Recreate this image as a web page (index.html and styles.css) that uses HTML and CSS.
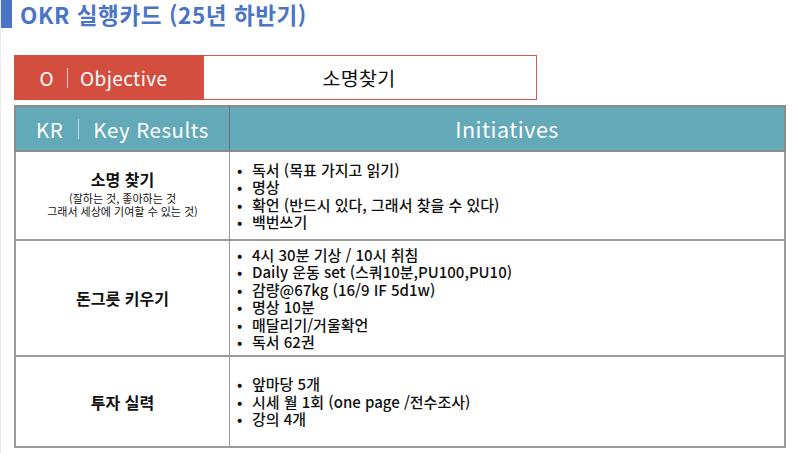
FILE: index.html
```html
<!DOCTYPE html>
<html lang="ko">
<head>
<meta charset="utf-8">
<title>OKR 실행카드</title>
<link rel="stylesheet" href="styles.css">
</head>
<body>
<div class="page">
  <header class="title-bar">
    <span class="title-mark"></span>
    <h1 class="title">OKR 실행카드 (25년 하반기)</h1>
  </header>

  <section class="objective">
    <div class="objective-label">O<span class="sep"></span>Objective</div>
    <div class="objective-value">소명찾기</div>
  </section>

  <section class="okr-table">
    <div class="head head-kr">KR<span class="sep light"></span>Key Results</div>
    <div class="head head-init">Initiatives</div>

    <div class="cell kr kr-1">
      <div class="kr-title">소명 찾기</div>
      <div class="kr-sub">(잘하는 것, 좋아하는 것<br>그래서 세상에 기여할 수 있는 것)</div>
    </div>
    <div class="cell init init-1">
      <ul class="bullets">
        <li>독서 (목표 가지고 읽기)</li>
        <li>명상</li>
        <li>확언 (반드시 있다, 그래서 찾을 수 있다)</li>
        <li>백번쓰기</li>
      </ul>
    </div>

    <div class="cell kr kr-2">
      <div class="kr-title">돈그릇 키우기</div>
    </div>
    <div class="cell init init-2">
      <ul class="bullets">
        <li>4시 30분 기상 / 10시 취침</li>
        <li>Daily 운동 set (스쿼10분,PU100,PU10)</li>
        <li>감량@67kg (16/9 IF 5d1w)</li>
        <li>명상 10분</li>
        <li>매달리기/거울확언</li>
        <li>독서 62권</li>
      </ul>
    </div>

    <div class="cell kr kr-3 last">
      <div class="kr-title">투자 실력</div>
    </div>
    <div class="cell init init-3 last">
      <ul class="bullets">
        <li>앞마당 5개</li>
        <li>시세 월 1회 (one page /전수조사)</li>
        <li>강의 4개</li>
      </ul>
    </div>
  </section>
</div>
</body>
</html>
```

FILE: styles.css
```css
* { box-sizing: border-box; }

html, body {
  margin: 0;
  padding: 0;
  background: #ffffff;
}

body {
  font-family: "Noto Sans CJK KR", "Noto Sans", sans-serif;
  color: #111;
}

.page {
  width: 808px;
  height: 453px;
  border-left: 1px solid #ededed;
  overflow: hidden;
}

.title-bar {
  display: flex;
  align-items: center;
  height: 28px;
  gap: 8px;
}

.title-mark {
  width: 11px;
  height: 28px;
  background: #4a74c6;
}

.title {
  margin: 0;
  font-size: 22.5px;
  line-height: 28px;
  font-weight: 700;
  color: #4a74c6;
  letter-spacing: 0.6px;
}

.objective {
  display: flex;
  margin: 27px 0 0 13px;
  width: 523px;
  height: 45px;
}

.objective-label {
  width: 189px;
  background: #d44e3f;
  color: #fff;
  font-size: 19px;
  letter-spacing: 0.4px;
  display: flex;
  align-items: center;
  justify-content: center;
  padding-right: 10px;
}

.sep {
  display: inline-block;
  width: 1px;
  height: 20px;
  background: rgba(255,255,255,0.75);
  margin: 0 12px 0 13px;
}

.sep.light { background: rgba(255,255,255,0.55); margin: 0 14px 0 15px; }

.objective-value {
  flex: 1;
  border: 1px solid #e0524a;
  display: flex;
  align-items: center;
  justify-content: center;
  font-size: 19.5px;
  color: #111;
  padding-right: 22px;
  letter-spacing: 0.3px;
}

.okr-table {
  display: grid;
  grid-template-columns: 216px 556px;
  grid-template-rows: 47px 89px 116px 91px;
  margin: 5px 0 0 13px;
  width: 772px;
}

.head {
  background: #63a9b8;
  color: #fff;
  font-size: 20.5px;
  letter-spacing: 0.5px;
  display: flex;
  align-items: center;
  justify-content: center;
  border-top: 2px solid #8c8c8c;
  border-bottom: 2px solid #8c8c8c;
}

.head-kr {
  border-left: 2px solid #8c8c8c;
  border-right: 1px solid #6d6d6d;
}

.head-init {
  border-right: 2px solid #8c8c8c;
  font-size: 21.5px;
}

.cell {
  border-bottom: 2px solid #9a9a9a;
}

.kr {
  border-left: 2px solid #9a9a9a;
  border-right: 1px solid #9a9a9a;
  display: flex;
  flex-direction: column;
  align-items: center;
  justify-content: center;
  text-align: center;
}

.init {
  border-right: 2px solid #9a9a9a;
  display: flex;
  align-items: center;
  padding-left: 6px;
}

.kr-title {
  font-size: 16px;
  font-weight: 700;
  line-height: 20px;
}

.kr-1 .kr-title { margin-top: -4px; margin-bottom: 3px; }

.kr-sub {
  font-size: 11px;
  line-height: 13px;
}

.bullets {
  list-style: none;
  margin: 0;
  padding: 0;
  font-size: 15px;
  line-height: 17.5px;
  font-weight: 500;
}

.bullets li {
  display: flex;
}

.bullets li::before {
  content: "•";
  width: 15px;
  flex: none;
  text-align: left;
  padding-left: 1px;
}
```
